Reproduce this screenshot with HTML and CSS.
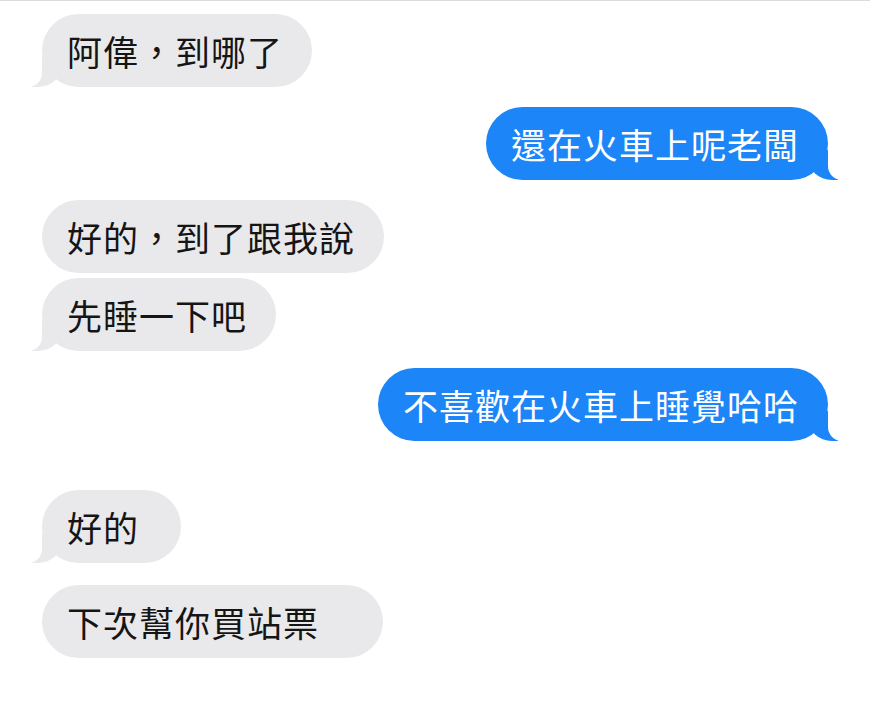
FILE: index.html
```
<!DOCTYPE html>
<html>
<head>
    <meta charset="UTF-8">
    <title>訊息</title>
    <link rel="stylesheet" href="styles.css">
</head>
<body>
    <div class="chat">
        <div class="msg them tail gap1">阿偉，到哪了</div>
        <div class="msg me tail gap2">還在火車上呢老闆</div>
        <div class="msg them gap2">好的，到了跟我說</div>
        <div class="msg them tail gap3">先睡一下吧</div>
        <div class="msg me tail gap4">不喜歡在火車上睡覺哈哈</div>
        <div class="msg them tail wide gap5">好的</div>
        <div class="msg them wider gap6">下次幫你買站票</div>
    </div>
</body>
</html>
```

FILE: styles.css
```
*{
    margin: 0;
    padding: 0;
    box-sizing: border-box;
}
html,body{
    width: 100%;
    height: 100%;
    background: #fff;
}
body{
    border-top: 1px solid #dcdcde;
    font-family: "Noto Sans CJK TC", "Noto Sans", sans-serif;
}
.chat{
    display: flex;
    flex-direction: column;
    padding: 0 42px;
}
.msg{
    position: relative;
    height: 73px;
    line-height: 73px;
    padding: 0 29px 0 25px;
    border-radius: 37px;
    font-size: 35px;
    letter-spacing: 1px;
    white-space: nowrap;
}
.them{
    align-self: flex-start;
    background: #e9e9eb;
    color: #151515;
}
.me{
    align-self: flex-end;
    background: #1c85f7;
    color: #fff;
}
.wide{
    padding-right: 42px;
}
.wider{
    padding-right: 64px;
}
/* spacing between messages */
.gap1{ margin-top: 13px; }
.gap2{ margin-top: 20px; }
.gap3{ margin-top: 5px; }
.gap4{ margin-top: 17px; }
.gap5{ margin-top: 49px; }
.gap6{ margin-top: 22px; }
/* tail */
.tail:before,
.tail:after{
    content: "";
    position: absolute;
    bottom: 0;
    height: 30px;
}
.them.tail:before{
    left: -10px;
    border-right: 30px solid #e9e9eb;
    border-bottom-right-radius: 24px 22px;
}
.them.tail:after{
    left: -28px;
    width: 28px;
    background: #fff;
    border-bottom-right-radius: 14px;
}
.me.tail:before{
    right: -10px;
    border-left: 30px solid #1c85f7;
    border-bottom-left-radius: 24px 22px;
}
.me.tail:after{
    right: -28px;
    width: 28px;
    background: #fff;
    border-bottom-left-radius: 14px;
}
```
